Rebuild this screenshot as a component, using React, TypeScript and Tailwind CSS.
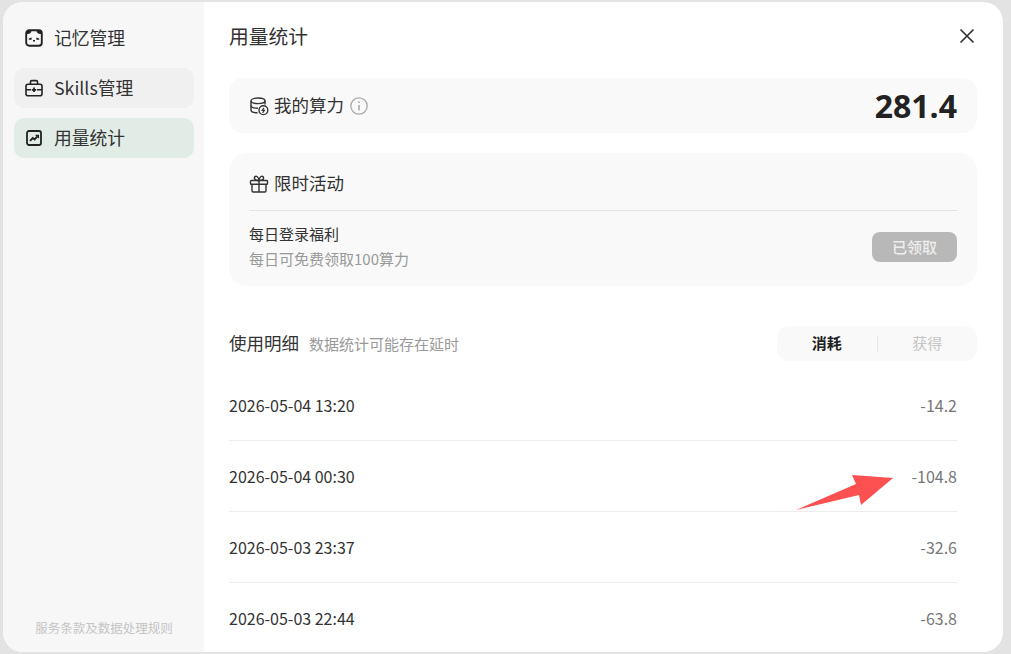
import React from "react";

const font = { fontFamily: '"Noto Sans CJK SC", "Noto Sans", sans-serif' };

function PandaIcon() {
  return (
    <svg width="20" height="20" viewBox="0 0 20 20" fill="none">
      <rect x="2.2" y="2.2" width="15.6" height="15.6" rx="3" stroke="#222" strokeWidth="1.9" />
      <path d="M2 5 Q2 2 5 2 H7.5 Q7.5 6 3.5 6 H2Z" fill="#222" />
      <path d="M18 5 Q18 2 15 2 H12.5 Q12.5 6 16.5 6 H18Z" fill="#222" />
      <path d="M4.8 10.6 L7.6 9.4 V11.8 H4.8Z" fill="#222" />
      <path d="M15.2 10.6 L12.4 9.4 V11.8 H15.2Z" fill="#222" />
      <rect x="9" y="12" width="2" height="1.5" fill="#222" />
    </svg>
  );
}

function KitIcon() {
  return (
    <svg width="20" height="20" viewBox="0 0 20 20" fill="none" stroke="#222" strokeWidth="1.6">
      <rect x="2" y="6.2" width="16" height="11.6" rx="2" />
      <path d="M6.5 6V3.8Q6.5 2.6 7.7 2.6H12.3Q13.5 2.6 13.5 3.8V6" />
      <path d="M2 11.8H7M13 11.8H18" />
      <path d="M7.8 11.8H12.2M10 9.6V14" strokeWidth="1.8" />
    </svg>
  );
}

function ChartIcon() {
  return (
    <svg width="20" height="20" viewBox="0 0 20 20" fill="none" stroke="#222">
      <rect x="3" y="3" width="14" height="14" rx="2" strokeWidth="1.8" />
      <path d="M6 12.8L8.8 10L10.6 11.4L13.6 8.2" strokeWidth="1.9" />
      <path d="M11.6 7.4H14.4V10.2" strokeWidth="1.3" />
    </svg>
  );
}

function DbIcon() {
  return (
    <svg width="20" height="20" viewBox="0 0 20 20" fill="none" stroke="#333" strokeWidth="1.4">
      <ellipse cx="9" cy="4.8" rx="7" ry="2.8" />
      <path d="M2 4.8V14C2 15.8 5 16.8 8.5 16.8" />
      <path d="M16 4.8V8.5" />
      <path d="M2 9.4C2 11 5 12.2 9 12.2" />
      <circle cx="14.4" cy="14.2" r="4.4" fill="#fff" />
      <path d="M15 11.8L13.2 14.4H15.4L13.6 16.8" strokeWidth="1.2" />
    </svg>
  );
}

function InfoIcon() {
  return (
    <svg width="18" height="18" viewBox="0 0 18 18" fill="none" stroke="#aaa" strokeWidth="1.3">
      <circle cx="9" cy="9" r="8.2" />
      <path d="M9 8V13.4" strokeWidth="1.6" />
      <path d="M9 4.4V6" strokeWidth="1.7" />
    </svg>
  );
}

function GiftIcon() {
  return (
    <svg width="20" height="20" viewBox="0 0 20 20" fill="none" stroke="#333" strokeWidth="1.4">
      <rect x="1.5" y="6.5" width="17" height="3.7" rx="0.8" />
      <path d="M3 10.2V16.8Q3 18 4.2 18H15.8Q17 18 17 16.8V10.2" />
      <path d="M10 6.5V18" />
      <path d="M10 6.5C8.5 6.5 6 6.5 5.5 4.8C5 3 6.5 1.6 8 2.5C9.2 3.3 10 5.2 10 6.5Z" />
      <path d="M10 6.5C11.5 6.5 14 6.5 14.5 4.8C15 3 13.5 1.6 12 2.5C10.8 3.3 10 5.2 10 6.5Z" />
    </svg>
  );
}

function NavItem({ icon, label, cls }: { icon: React.ReactNode; label: string; cls: string }) {
  return (
    <div className={`flex h-10 items-center gap-[10px] rounded-[10px] pb-[1px] pl-[10px] text-[17.8px] text-[#333] ${cls}`}>
      {icon}
      <span>{label}</span>
    </div>
  );
}

function Row({ time, value, last }: { time: string; value: string; last?: boolean }) {
  return (
    <div className={`mr-5 flex h-[71px] shrink-0 items-center justify-between pb-[1px] text-[16px] ${last ? "" : "border-b border-[#ececec]"}`}>
      <span className="text-[#333]">{time}</span>
      <span className="text-[#777]">{value}</span>
    </div>
  );
}

export default function App() {
  return (
    <div style={font} className="relative h-[654px] w-[1011px] overflow-hidden bg-[#e3e3e3] pl-[3px] pt-[2px]">
      <div className="flex h-[650px] w-[1000px] overflow-hidden rounded-[20px] bg-white">
        <aside className="flex w-[201px] shrink-0 flex-col bg-[#f7f7f7] pl-[11px] pr-[10px] pt-[16px]">
          <div className="flex flex-col gap-[10px]">
            <NavItem icon={<PandaIcon />} label="记忆管理" cls="" />
            <NavItem icon={<KitIcon />} label="Skills管理" cls="bg-[#f0f0f0]" />
            <NavItem icon={<ChartIcon />} label="用量统计" cls="bg-[#e2ece6]" />
          </div>
          <div className="mt-auto pb-[14px] text-center text-[12.5px] leading-[20px] text-[#c4c4c4]">服务条款及数据处理规则</div>
        </aside>
        <main className="flex min-w-0 flex-1 flex-col pl-[25px] pr-[26px]">
          <div className="flex h-[76px] shrink-0 items-center justify-between pb-[9px] pr-[1px]">
            <h1 className="text-[19.8px] font-normal text-[#333]">用量统计</h1>
            <svg width="18" height="18" viewBox="0 0 18 18" stroke="#333" strokeWidth="1.7" fill="none">
              <path d="M2.5 2.5L15.5 15.5M15.5 2.5L2.5 15.5" />
            </svg>
          </div>
          <section className="flex h-[55px] shrink-0 items-center justify-between rounded-[14px] bg-[#f9f9f9] px-5">
            <div className="flex items-center gap-[5px] text-[17.5px] text-[#333]">
              <DbIcon />
              <span>我的算力</span>
              <span className="ml-[1px] flex"><InfoIcon /></span>
            </div>
            <span style={{ fontFamily: '"Open Sans", "Noto Sans", sans-serif' }} className="text-[32px] font-bold leading-none text-[#222]">281.4</span>
          </section>
          <section className="mt-5 h-[133px] shrink-0 rounded-[18px] bg-[#f9f9f9] px-5">
            <div className="flex h-[58px] items-center gap-[5px] border-b border-[#e3e3e3] pt-[4px] text-[17.5px] text-[#333]">
              <GiftIcon />
              <span>限时活动</span>
            </div>
            <div className="flex items-center justify-between pt-[12px]">
              <div>
                <div className="-mt-px text-[15px] leading-[24px] text-[#333]">每日登录福利</div>
                <div className="mt-[1px] text-[15px] leading-[24px] text-[#999]">每日可免费领取100算力</div>
              </div>
              <div className="flex h-[30px] w-[85px] items-center justify-center rounded-[8px] bg-[#b8b8b8] text-[15px] font-medium text-[#eeeeee]">已领取</div>
            </div>
          </section>
          <div className="mt-[40px] flex h-[35px] shrink-0 items-center justify-between">
            <div className="flex items-baseline gap-[10px]">
              <span className="text-[17.5px] text-[#333]">使用明细</span>
              <span className="text-[15px] text-[#999]">数据统计可能存在延时</span>
            </div>
            <div className="flex h-[35px] w-[200px] items-center rounded-[12px] bg-[#f9f9f9] text-[15px]">
              <span className="flex-1 text-center font-bold text-[#222]">消耗</span>
              <span className="h-[16px] w-px bg-[#e6e6e6]"></span>
              <span className="flex-1 text-center text-[#c4c4c4]">获得</span>
            </div>
          </div>
          <div className="mt-[9px] flex flex-col">
            <Row time="2026-05-04 13:20" value="-14.2" />
            <Row time="2026-05-04 00:30" value="-104.8" />
            <Row time="2026-05-03 23:37" value="-32.6" />
            <Row time="2026-05-03 22:44" value="-63.8" last />
          </div>
        </main>
      </div>
      <svg className="absolute left-[790px] top-[470px]" width="110" height="45" viewBox="790 470 110 45">
        <polygon points="796,510 856,484 852,475 893,478 861,505 859,495" fill="#fd5050" />
      </svg>
    </div>
  );
}
